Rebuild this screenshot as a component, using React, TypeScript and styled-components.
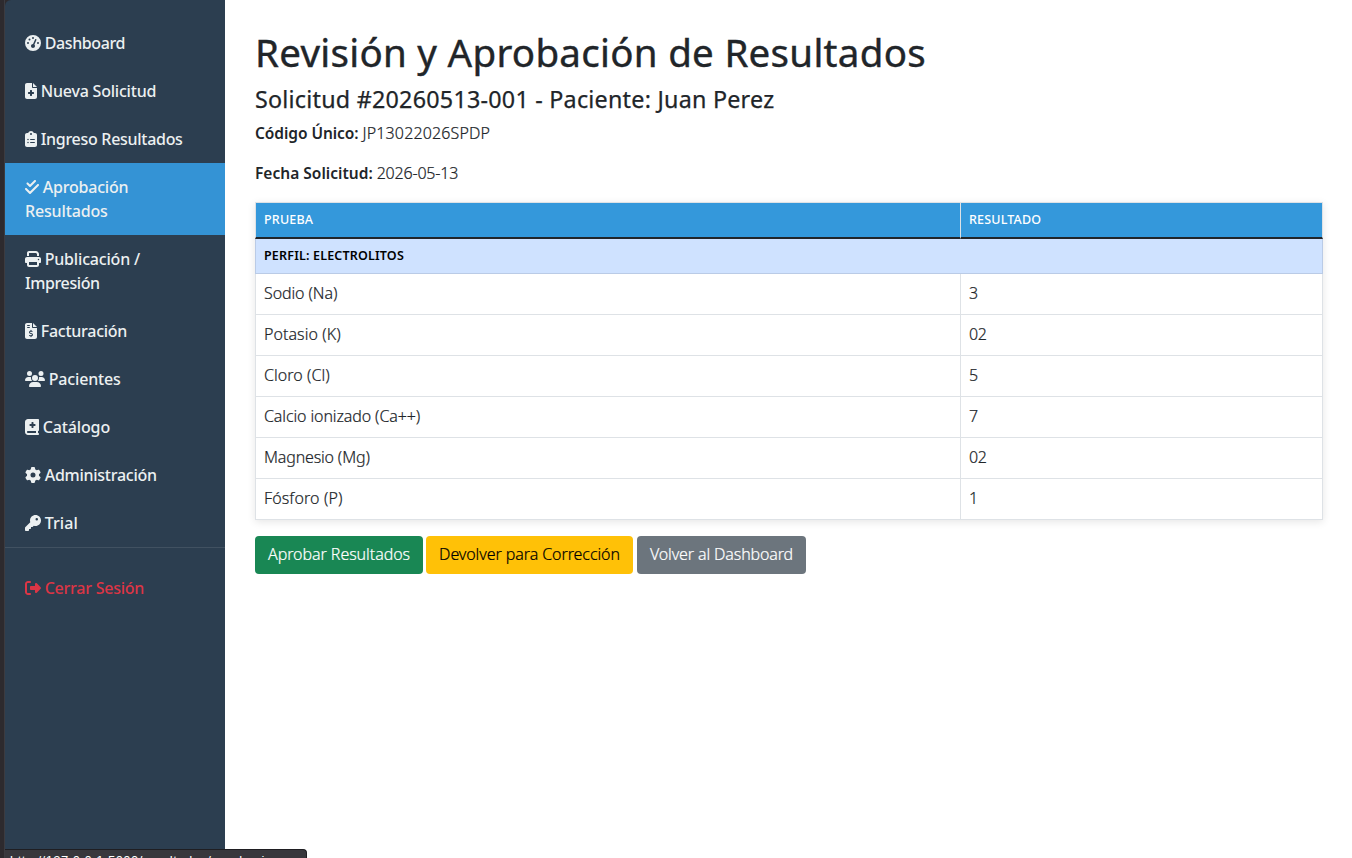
import React from "react";
import styled, { createGlobalStyle } from "styled-components";
import type { IconType } from "react-icons";
import {
  FaGaugeHigh,
  FaFileMedical,
  FaClipboardList,
  FaCheckDouble,
  FaPrint,
  FaFileInvoiceDollar,
  FaUsers,
  FaBookMedical,
  FaGear,
  FaKey,
  FaRightFromBracket,
} from "react-icons/fa6";

const GlobalStyle = createGlobalStyle`
  *, *::before, *::after { box-sizing: border-box; }
  html, body { margin: 0; height: 100%; overflow: hidden; }
  body {
    font-family: "Noto Sans", "Open Sans", sans-serif;
    font-size: 16px;
    font-weight: 300;
    line-height: 24px;
    color: #212529;
    background: #fff;
  }
`;

const Page = styled.div`
  display: flex;
  height: 858px;
  overflow: hidden;
`;

const WindowEdge = styled.div`
  flex: 0 0 5px;
  background: #2d2a2e;
  border-right: 1px solid #3c3b40;
`;

const SidebarFrame = styled.div`
  flex: 0 0 220px;
  background: #2d2a2e;
`;

const Sidebar = styled.nav`
  height: 100%;
  padding-top: 19px;
  background: #2c3e50;
  border-top-left-radius: 6px;
`;

const NavLink = styled.a<{ $active?: boolean; $danger?: boolean; $iconWidth?: number }>`
  display: block;
  padding: 12px 20px;
  font-weight: 500;
  white-space: nowrap;
  color: ${(p) => (p.$danger ? "#dc3545" : "#ecf0f1")};
  background: ${(p) => (p.$active ? "#3493d5" : "transparent")};

  svg {
    display: inline-block;
    height: 16px;
    width: ${(p) => p.$iconWidth ?? 16}px;
    margin-right: 3.7px;
    vertical-align: -2px;
  }
`;

const LogoutSection = styled.div`
  padding-top: 16px;
  border-top: 1px solid #415161;
`;

const Tracked = styled.span<{ $track: number }>`
  letter-spacing: ${(p) => p.$track}px;
`;

const Main = styled.main`
  flex: 1;
  min-width: 0;
  padding: 28px 29px 0 30px;
`;

const Title = styled.h1`
  margin: 0 0 9px;
  font-size: 38.5px;
  line-height: 48px;
  font-weight: 400;
  letter-spacing: 0.28px;
  -webkit-text-stroke: 0.4px currentColor;
  white-space: nowrap;
`;

const Subtitle = styled.h3`
  margin: 0 0 7px;
  font-size: 23.3px;
  line-height: 29px;
  font-weight: 400;
  letter-spacing: 0.24px;
  -webkit-text-stroke: 0.25px currentColor;
  white-space: nowrap;
`;

const Info = styled.p`
  margin: 0 0 16px;
  display: flex;
  gap: 4px;
`;

const Label = styled.strong<{ $track: number }>`
  font-size: 15.5px;
  font-weight: 600;
  letter-spacing: ${(p) => p.$track}px;
`;

const Value = styled(Tracked)`
  -webkit-text-stroke: 0.2px currentColor;
`;

const ResultsTable = styled.table`
  width: 1068px;
  margin: 17px 0 16px;
  table-layout: fixed;
  border-collapse: separate;
  border-spacing: 0;
  background: #fff;
  box-shadow: 0 2px 8px rgba(0, 0, 0, 0.1);
`;

const HeadCell = styled.th`
  height: 37px;
  padding: 0 8px;
  text-align: left;
  font-size: 12.5px;
  line-height: 20px;
  font-weight: 500;
  letter-spacing: 0.18px;
  color: #fff;
  background: #3498db;
  border-top: 1px solid #dee2e6;
  border-right: 1px solid #dee2e6;
  border-bottom: 2px solid #212529;

  &:first-child {
    width: 706px;
    border-left: 1px solid #dee2e6;
  }
`;

const GroupCell = styled.td`
  height: 35px;
  padding: 0 8px;
  font-size: 12.5px;
  line-height: 20px;
  font-weight: 600;
  letter-spacing: 0.18px;
  color: #000;
  background: #cfe2ff;
  border: solid #bacbe6;
  border-width: 0 1px 1px;
`;

const Cell = styled.td<{ $track?: number }>`
  height: 41px;
  padding: 0 8px 2px;
  letter-spacing: ${(p) => p.$track ?? 0}px;
  -webkit-text-stroke: 0.2px currentColor;
  border: solid #dee2e6;
  border-width: 0 1px 1px 0;

  &:first-child {
    border-left-width: 1px;
  }
`;

const Actions = styled.div`
  display: flex;
`;

const tones = {
  success: { bg: "#198754", fg: "#fff", width: 168 },
  warning: { bg: "#ffc107", fg: "#000", width: 207 },
  secondary: { bg: "#6c757d", fg: "#fff", width: 169 },
};

const Button = styled.button<{ $tone: keyof typeof tones; $track: number }>`
  width: ${(p) => tones[p.$tone].width}px;
  height: 38px;
  margin-right: ${(p) => (p.$tone === "success" ? 3 : 4)}px;
  padding: 0 0 2px;
  border: 0;
  border-radius: 4px;
  font: inherit;
  white-space: nowrap;
  letter-spacing: ${(p) => p.$track}px;
  -webkit-text-stroke: 0.2px currentColor;
  color: ${(p) => tones[p.$tone].fg};
  background: ${(p) => tones[p.$tone].bg};
`;

const StatusBubble = styled.div`
  position: absolute;
  left: 5px;
  top: 849px;
  width: 302px;
  height: 9px;
  padding: 3px 4px 0 5px;
  overflow: hidden;
  font: 13px/16px "Liberation Sans", Arial, sans-serif;
  letter-spacing: 0.45px;
  white-space: nowrap;
  color: #fff;
  background: #38373c;
  border-top: 1px solid #1f1e22;
  border-right: 1px solid #1f1e22;
  border-top-right-radius: 4px;
`;

type NavItem = {
  icon: IconType;
  iconWidth: number;
  lines: [string, number][];
  active?: boolean;
};

const navItems: NavItem[] = [
  { icon: FaGaugeHigh, iconWidth: 16, lines: [["Dashboard", -0.38]] },
  { icon: FaFileMedical, iconWidth: 12, lines: [["Nueva Solicitud", -0.2]] },
  { icon: FaClipboardList, iconWidth: 12, lines: [["Ingreso Resultados", -0.29]] },
  { icon: FaCheckDouble, iconWidth: 14, lines: [["Aprobación", -0.2], ["Resultados", -0.15]], active: true },
  { icon: FaPrint, iconWidth: 16, lines: [["Publicación /", -0.18], ["Impresión", -0.39]] },
  { icon: FaFileInvoiceDollar, iconWidth: 12, lines: [["Facturación", -0.25]] },
  { icon: FaUsers, iconWidth: 20, lines: [["Pacientes", -0.16]] },
  { icon: FaBookMedical, iconWidth: 14, lines: [["Catálogo", -0.13]] },
  { icon: FaGear, iconWidth: 16, lines: [["Administración", -0.26]] },
  { icon: FaKey, iconWidth: 16, lines: [["Trial", 0.1]] },
];

const results: { name: string; value: string; track: number }[] = [
  { name: "Sodio (Na)", value: "3", track: -0.1 },
  { name: "Potasio (K)", value: "02", track: 0.06 },
  { name: "Cloro (Cl)", value: "5", track: 0.05 },
  { name: "Calcio ionizado (Ca++)", value: "7", track: -0.11 },
  { name: "Magnesio (Mg)", value: "02", track: -0.16 },
  { name: "Fósforo (P)", value: "1", track: 0.11 },
];

export default function App() {
  return (
    <>
      <GlobalStyle />
      <Page>
        <WindowEdge />
        <SidebarFrame>
          <Sidebar>
            {navItems.map(({ icon: Icon, iconWidth, lines, active }) => (
              <NavLink key={lines[0][0]} $active={active} $iconWidth={iconWidth}>
                <Icon />
                {lines.map(([text, track], i) => (
                  <React.Fragment key={text}>
                    {i > 0 && <br />}
                    <Tracked $track={track}>{text}</Tracked>
                  </React.Fragment>
                ))}
              </NavLink>
            ))}
            <LogoutSection>
              <NavLink $danger>
                <FaRightFromBracket />
                <Tracked $track={-0.24}>Cerrar Sesión</Tracked>
              </NavLink>
            </LogoutSection>
          </Sidebar>
        </SidebarFrame>
        <Main>
          <Title>Revisión y Aprobación de Resultados</Title>
          <Subtitle>Solicitud #20260513-001 - Paciente: Juan Perez</Subtitle>
          <Info>
            <Label $track={-0.06}>Código Único:</Label>
            <Value $track={0.15}>JP13022026SPDP</Value>
          </Info>
          <Info>
            <Label $track={0.02}>Fecha Solicitud:</Label>
            <Value $track={-0.2}>2026-05-13</Value>
          </Info>
          <ResultsTable>
            <thead>
              <tr>
                <HeadCell>PRUEBA</HeadCell>
                <HeadCell>RESULTADO</HeadCell>
              </tr>
            </thead>
            <tbody>
              <tr>
                <GroupCell colSpan={2}>PERFIL: ELECTROLITOS</GroupCell>
              </tr>
              {results.map((r) => (
                <tr key={r.name}>
                  <Cell $track={r.track}>{r.name}</Cell>
                  <Cell $track={-0.3}>{r.value}</Cell>
                </tr>
              ))}
            </tbody>
          </ResultsTable>
          <Actions>
            <Button $tone="success" $track={-0.06}>Aprobar Resultados</Button>
            <Button $tone="warning" $track={-0.08}>Devolver para Corrección</Button>
            <Button $tone="secondary" $track={-0.13}>Volver al Dashboard</Button>
          </Actions>
        </Main>
      </Page>
      <StatusBubble>http://127.0.0.1:5000/resultados/aprobacion</StatusBubble>
    </>
  );
}
